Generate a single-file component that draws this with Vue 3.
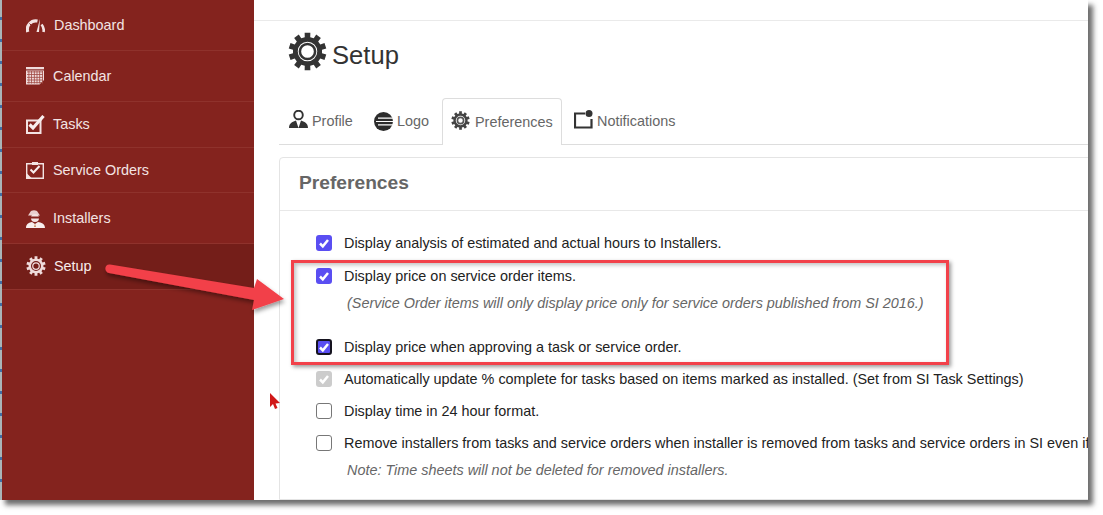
<script setup>
function gearPath(cx, cy, rOuter, rRoot, teeth, hole) {
  const pts = []
  const step = (Math.PI * 2) / teeth
  for (let i = 0; i < teeth; i++) {
    const a = i * step - Math.PI / 2
    const w = step * 0.24
    const w2 = step * 0.3
    const p = (r, t) => `${(cx + r * Math.cos(t)).toFixed(2)} ${(cy + r * Math.sin(t)).toFixed(2)}`
    pts.push(p(rRoot, a - w2), p(rOuter, a - w), p(rOuter, a + w), p(rRoot, a + w2))
  }
  const h = `M${cx - hole} ${cy}a${hole} ${hole} 0 1 0 ${hole * 2} 0a${hole} ${hole} 0 1 0 ${-hole * 2} 0Z`
  return `M${pts.join('L')}Z${h}`
}
const gear = gearPath(20, 20, 19.5, 15, 10, 10)

const nav = [
  { label: 'Dashboard', icon: 'dash', size: 'tall', wide: true },
  { label: 'Calendar', icon: 'cal', size: 'tall' },
  { label: 'Tasks', icon: 'task', size: 'short' },
  { label: 'Service Orders', icon: 'order', size: 'shorter' },
  { label: 'Installers', icon: 'inst', size: 'tall' },
  { label: 'Setup', icon: 'gear', size: 'short', active: true, wide: true },
]
const calLines = [4.5, 7.2, 9.900, 12.600, 15.300]
const calCols = [2.5, 5.2, 7.9, 10.6, 13.3, 16]
</script>

<template>
  <div class="page">
    <div class="frame">
      <div class="strip"></div>
      <aside class="side">
        <a v-for="n in nav" :key="n.label" class="nav" :class="[n.size, { active: n.active, wide: n.wide }]">
          <span class="nav-ic">
            <svg v-if="n.icon === 'dash'" width="19" height="15" viewBox="0 0 19 15">
              <path d="M1.800 14 A8.500 8.500 0 0 1 11.500 3" fill="none" stroke="#f3e3e3" stroke-width="3.200" />
              <path d="M3.500 5.500L6 8" stroke="#84231e" stroke-width="1" />
              <path d="M14 1 L10.500 14 L13 14 Z" fill="#f3e3e3" />
              <path d="M15.500 6.500 A8.500 8.500 0 0 1 17.500 14" fill="none" stroke="#f3e3e3" stroke-width="2.600" />
            </svg>
            <svg v-else-if="n.icon === 'cal'" width="18" height="18" viewBox="0 0 18 18">
              <path d="M0 0H18V13L13.500 17.500H0Z" fill="#f0dcdc" />
              <rect x="0" y="2.300" width="18" height="1.200" fill="#84231e" />
              <rect v-for="l in calLines" :key="'l' + l" x="1" :y="l" width="16" height=".8" fill="#a14a44" />
              <rect v-for="c in calCols" :key="'c' + c" :x="c" y="4" width=".8" height="12.500" fill="#a14a44" />
            </svg>
            <svg v-else-if="n.icon === 'task'" width="19" height="19" viewBox="0 0 19 19">
              <path d="M1 5.500H14.500V18H1Z" fill="none" stroke="#f3e3e3" stroke-width="2" />
              <path d="M3.500 9.500L7 13L17.500 1" fill="none" stroke="#f8eeee" stroke-width="3.200" />
            </svg>
            <svg v-else-if="n.icon === 'order'" width="18" height="17" viewBox="0 0 18 17">
              <path d="M0.700 1.700H17.300V16.300H0.700Z" fill="none" stroke="#f3e3e3" stroke-width="1.400" />
              <path d="M6 0H12V3H6Z" fill="#f3e3e3" />
              <path d="M4.500 7.500L7.500 10.500L13.500 4" fill="none" stroke="#f8eeee" stroke-width="2" />
              <path d="M1 11.500L6 16.500H1Z" fill="#f3e3e3" />
            </svg>
            <svg v-else-if="n.icon === 'inst'" width="19" height="19" viewBox="0 0 19 19">
              <path d="M4 3.500C5 .5 11 .5 12 3.500L14 6.500H2Z" fill="#e9cfcf" />
              <circle cx="9" cy="9" r="4" fill="#f3e3e3" />
              <path d="M5 7.500H13V9.500H5Z" fill="#84231e" />
              <path d="M0 19C0 14.500 3.500 13.500 6 13L9 15L12 13C15 13.500 19 14.500 19 19Z" fill="#f8eeee" />
              <path d="M9 14.500L10 18H8Z" fill="#c98a5c" />
            </svg>
            <svg v-else width="20" height="20" viewBox="0 0 40 40">
              <path :d="gear" fill="#f0dcdc" fill-rule="evenodd" />
              <circle cx="20" cy="20" r="6.500" fill="none" stroke="#f0dcdc" stroke-width="2.500" />
            </svg>
          </span>
          <span class="nav-label">{{ n.label }}</span>
        </a>
        <div class="nav-rest"></div>
      </aside>

      <main class="main">
        <div class="topbar"></div>
        <div class="title-row">
          <svg width="39" height="39" viewBox="0 0 40 40">
            <path :d="gear" fill="#333" fill-rule="evenodd" />
            <circle cx="20" cy="20" r="7.800" fill="none" stroke="#333" stroke-width="2.600" />
          </svg>
          <h1>Setup</h1>
        </div>

        <div class="tabs">
          <a class="tab t-profile">
            <svg class="ic-up" width="19" height="18" viewBox="0 0 19 18">
              <circle cx="9.500" cy="5" r="4.300" fill="none" stroke="#333" stroke-width="1.900" />
              <path d="M0 18C0 13 4 11.500 7 10.500L9.500 18L12 10.500C15 11.500 19 13 19 18Z" fill="#333" />
            </svg>
            <span>Profile</span>
          </a>
          <a class="tab t-logo">
            <svg width="20" height="19" viewBox="0 0 20 19">
              <circle cx="9.500" cy="9.500" r="9.500" fill="#2c2c2c" />
              <path d="M4 6.200H20M2 9.500H20M4 12.800H20" stroke="#fff" stroke-width="1.200" />
            </svg>
            <span>Logo</span>
          </a>
          <a class="tab t-pref">
            <svg class="ic-up" width="19" height="19" viewBox="0 0 40 40">
              <path :d="gear" fill="#444" fill-rule="evenodd" />
              <circle cx="20" cy="20" r="6.500" fill="none" stroke="#555" stroke-width="3.500" />
            </svg>
            <span>Preferences</span>
          </a>
          <a class="tab t-note">
            <svg class="ic-up" width="19" height="19" viewBox="0 0 19 19">
              <path d="M11 3.500H1V17.500H17.500V9" fill="none" stroke="#333" stroke-width="2.200" />
              <circle cx="15" cy="3.500" r="3.500" fill="#333" />
            </svg>
            <span>Notifications</span>
          </a>
        </div>

        <section class="card">
          <h2>Preferences</h2>
          <div class="opts">
            <label class="opt">
              <span class="cb on"><svg width="12" height="12" viewBox="0 0 12 12"><path d="M2 6.500L4.800 9.300L10 3" /></svg></span>
              <span>Display analysis of estimated and actual hours to Installers.</span>
            </label>
            <label class="opt with-note">
              <span class="cb on"><svg width="12" height="12" viewBox="0 0 12 12"><path d="M2 6.500L4.800 9.300L10 3" /></svg></span>
              <span>Display price on service order items.</span>
            </label>
            <p class="note n-gap">(Service Order items will only display price only for service orders published from SI 2016.)</p>
            <label class="opt">
              <span class="cb on focus"><svg width="12" height="12" viewBox="0 0 12 12"><path d="M2 6.500L4.800 9.300L10 3" /></svg></span>
              <span>Display price when approving a task or service order.</span>
            </label>
            <label class="opt">
              <span class="cb dis"><svg width="12" height="12" viewBox="0 0 12 12"><path d="M2 6.500L4.800 9.300L10 3" /></svg></span>
              <span>Automatically update % complete for tasks based on items marked as installed. (Set from SI Task Settings)</span>
            </label>
            <label class="opt">
              <span class="cb off"></span>
              <span>Display time in 24 hour format.</span>
            </label>
            <label class="opt with-note">
              <span class="cb off"></span>
              <span>Remove installers from tasks and service orders when installer is removed from tasks and service orders in SI even if</span>
            </label>
            <p class="note">Note: Time sheets will not be deleted for removed installers.</p>
          </div>
        </section>
      </main>

      <div class="callout"></div>
      <svg class="arrow" width="190" height="60" viewBox="0 0 190 60">
        <defs>
          <filter id="ds" x="-10%" y="-30%" width="120%" height="170%">
            <feDropShadow dx="1" dy="3" stdDeviation="2" flood-color="#000" flood-opacity=".4" />
          </filter>
        </defs>
        <path d="M6 1.500 L150 25 L153 16 L180 36 L148 47 L150 37 L5 10 C0 9 0 1 6 1.500Z" fill="#f2414a" filter="url(#ds)" />
      </svg>
      <svg class="cursor" width="13" height="19" viewBox="0 0 13 19">
        <path d="M1 1V15L4 12L6 17L8.500 16L6.500 11.500L11 11Z" fill="#d01818" />
      </svg>
    </div>
  </div>
</template>

<style>
html, body { margin: 0; background: #fff; }
</style>

<style scoped>
.page {
  width: 1103px;
  height: 515px;
  background: #fff;
  overflow: hidden;
  font-family: "Liberation Sans", Arial, sans-serif;
}
.frame {
  position: relative;
  width: 1088px;
  height: 500px;
  display: flex;
  background: #fff;
  box-shadow: 5px 5px 5px rgba(60, 60, 60, .75);
}
.strip {
  width: 2px;
  flex: none;
  background: repeating-linear-gradient(180deg, #a9b5b8 0 17px, #3f6ea6 17px 20px, #a9b5b8 20px 22px);
}
.side {
  width: 252px;
  flex: none;
  display: flex;
  flex-direction: column;
  background: #84231e;
}
.nav {
  display: flex;
  align-items: center;
  padding-left: 24px;
  border-bottom: 1px solid #8f322c;
  color: #f3e3e3;
  font-size: 14.4px;
}
.tall { height: 50px; }
.short { height: 44px; padding-bottom: 1px; }
.shorter { height: 44px; }
.nav.active { background: #741e19; color: #f8ecec; }
.nav-ic { width: 27px; display: flex; align-items: center; }
.wide .nav-ic { width: 28px; }
.nav-rest { flex: 1; }

.main {
  flex: 1;
  min-width: 0;
  display: flex;
  flex-direction: column;
  overflow: hidden;
}
.topbar { height: 20px; flex: none; border-bottom: 1px solid #eaeaea; }
.title-row {
  display: flex;
  align-items: center;
  gap: 5px;
  margin: 11px 0 0 34px;
  height: 39px;
}
h1 {
  margin: 0;
  padding-top: 7px;
  font-size: 25.6px;
  font-weight: 400;
  color: #333;
}
.tabs {
  display: flex;
  margin: 27px 0 0 25px;
  height: 46px;
  border-bottom: 1px solid #ddd;
  flex: none;
  color: #666;
  font-size: 14.4px;
}
.tab {
  display: flex;
  align-items: center;
  box-sizing: border-box;
  height: 46px;
}
.ic-up { margin-bottom: 4px; }
.t-profile { padding-left: 10px; width: 86px; gap: 4px; }
.t-logo { padding-left: 9px; width: 77px; gap: 3px; }
.t-pref {
  width: 120px;
  height: 47px;
  padding-left: 8px;
  gap: 5px;
  background: #fff;
  border: 1px solid #ddd;
  border-bottom: 0;
  border-radius: 4px 4px 0 0;
}
.t-note { padding-left: 12px; gap: 4px; }

.card {
  margin: 12px 0 0 25px;
  width: 900px;
  flex: 1;
  border: 1px solid #e4e4e4;
  border-radius: 4px 0 0 0;
  box-sizing: border-box;
}
h2 {
  margin: 0;
  height: 52px;
  line-height: 50px;
  padding-left: 19px;
  font-size: 19.2px;
  font-weight: 700;
  color: #666;
  border-bottom: 1px solid #e8e8e8;
}
.opts { padding: 22px 0 0 36px; }
.opt {
  display: flex;
  align-items: center;
  height: 20px;
  margin-bottom: 12px;
  color: #222;
  font-size: 14.4px;
  white-space: nowrap;
}
.opts .opt:nth-child(2) { margin-top: 13px; }
.with-note { margin-bottom: 7px; }
.cb {
  box-sizing: border-box;
  width: 16px;
  height: 16px;
  border-radius: 3px;
  margin-right: 12px;
  flex: none;
  display: flex;
  align-items: center;
  justify-content: center;
}
.cb path { fill: none; stroke: #fff; stroke-width: 2.5; }
.cb.on { background: #5a4ef2; }
.cb.focus { border: 2px solid #15131f; }
.cb.dis { background: #ccc; }
.cb.off { background: #fff; border: 1.5px solid #777; }
.note {
  margin: 0 0 0 31px;
  height: 20px;
  line-height: 20px;
  font-size: 14.4px;
  font-style: italic;
  color: #666;
  white-space: nowrap;
}
.n-gap { margin-bottom: 24px; }

.callout {
  position: absolute;
  left: 291px;
  top: 260px;
  width: 658px;
  height: 105px;
  box-sizing: border-box;
  border: 3px solid #f2414a;
  box-shadow: 2px 2px 4px rgba(0, 0, 0, .4), inset 2px 2px 4px rgba(0, 0, 0, .25);
}
.arrow { position: absolute; left: 104px; top: 263px; overflow: visible; }
.cursor { position: absolute; left: 269px; top: 392px; }
</style>
